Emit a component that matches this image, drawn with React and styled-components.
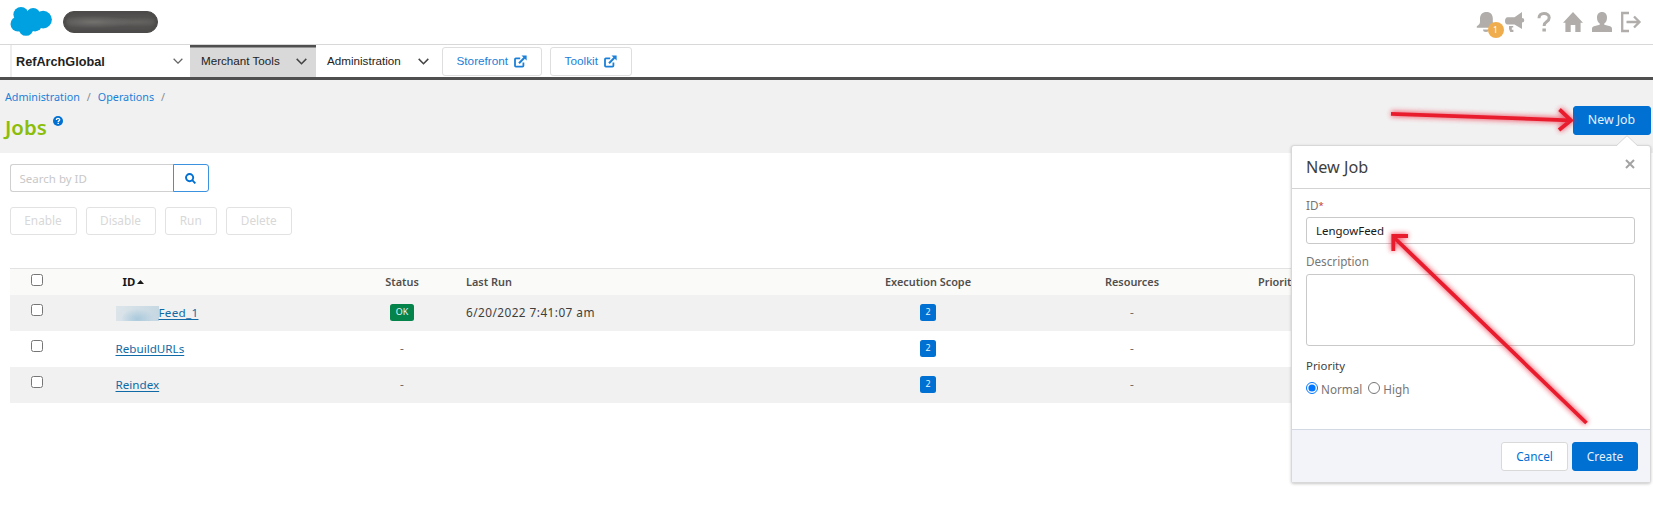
import React from "react";
import styled, { createGlobalStyle, css } from "styled-components";

const GlobalStyle = createGlobalStyle`
  :root {
    --blue: #0070d2;
    --link: #1b80d8;
    --green: #8bbe0b;
    --grey-bg: #f1f1f1;
    --dark: #4f4f4f;
    --icon: #b0adab;
  }

  * {
    box-sizing: border-box;
  }

  body {
    margin: 0;
    background: #fff;
    color: #3e3e3c;
    font-family: "Noto Sans", sans-serif;
    font-size: 11.8px;
    overflow: hidden;
  }

  input,
  textarea,
  button {
    font-family: inherit;
  }
`;

const Page = styled.div`
  position: relative;
  height: 515px;
  overflow: hidden;
`;

/* Top bar */

const TopBar = styled.header`
  display: flex;
  align-items: flex-start;
  height: 45px;
  padding: 7px 12.5px 0 10px;
  border-bottom: 1px solid #d8d8d8;
`;

const Account = styled.div`
  width: 95px;
  height: 22px;
  margin: 3.5px 0 0 10px;
  border: 1px solid #4c4a49;
  border-radius: 11px;
  background: radial-gradient(ellipse at 32% 50%, #74726f 0, transparent 45%),
    radial-gradient(ellipse at 78% 50%, #666461 0, transparent 35%), #535150;
  box-shadow: inset 0 0 3px 2px #4c4a49;
`;

const TopIcons = styled.div`
  display: flex;
  gap: 9px;
  margin: 5px 0 0 auto;
  color: var(--icon);

  svg {
    display: block;
    overflow: visible;
  }
`;

const Notifications = styled.div`
  position: relative;
`;

const Count = styled.span`
  position: absolute;
  left: 12px;
  top: 9.5px;
  width: 16px;
  height: 16px;
  border-radius: 50%;
  background: #f0ad4e;
  color: #fff;
  font-size: 8.5px;
  line-height: 16px;
  text-align: center;
`;

/* Navigation */

const Nav = styled.nav`
  display: flex;
  height: 35px;
  padding-left: 10px;
  border-bottom: 3px solid var(--dark);
  color: #222;
  font-family: "Liberation Sans", Arial, sans-serif;
  font-size: 11.65px;
  line-height: 32px;
`;

const Site = styled.div`
  display: flex;
  justify-content: space-between;
  width: 180px;
  padding: 1px 7px 0 4px;
  border-left: 2px solid #eee;
  font-size: 12.7px;
  font-weight: 700;

  svg {
    margin-top: 12px;
  }
`;

const NavTab = styled.div`
  display: flex;
  justify-content: space-between;
  width: ${({ $width }) => $width}px;
  padding: 0 ${({ $end = 9 }) => $end}px 0 11px;

  svg {
    margin-top: 13px;
  }

  ${({ $active }) =>
    $active &&
    css`
      background: #d9d9d9;
      box-shadow: inset 0 2.5px 0 var(--dark);
    `}
`;

const NavLink = styled.a`
  display: flex;
  align-items: center;
  gap: 6px;
  height: 29px;
  margin: 1.5px 7.5px 0 0;
  padding: 0 14px;
  border: 1px solid #dedede;
  border-radius: 3px;
  color: var(--link);
  line-height: 25px;
  font-size: 11.75px;

  span {
    padding-bottom: 2px;
  }
`;

/* Page heading */

const Heading = styled.section`
  display: flex;
  justify-content: space-between;
  height: 73px;
  padding: 0 2.5px 0 5px;
  background: var(--grey-bg);
`;

const Crumbs = styled.div`
  display: flex;
  gap: 7px;
  padding-top: 9px;
  font-size: 10.75px;
  line-height: 16px;
  color: #8a8a8a;

  a {
    color: var(--link);
  }
`;

const Title = styled.h1`
  display: flex;
  gap: 6px;
  margin: 0;
  padding-top: 8px;
  color: var(--green);
  font-size: 20.4px;
  font-weight: 600;
  line-height: 28px;

  svg {
    margin-top: 3px;
  }
`;

const Button = styled.button`
  height: 28.5px;
  width: ${({ $width }) => $width}px;
  padding: 0 0 1px;
  border: 1px solid #d9d9d9;
  border-radius: 3px;
  background: #fff;
  color: var(--blue);
  font-size: 11.8px;

  ${({ $primary }) =>
    $primary &&
    css`
      border-color: var(--blue);
      background: var(--blue);
      color: #e6f1fb;
    `}

  &:disabled {
    border-color: #e2e2e2;
    color: #d8d8d8;
  }
`;

const NewJobButton = styled(Button)`
  height: 29px;
  margin-top: 25.5px;
  font-size: 12.3px;
`;

/* Toolbar */

const Search = styled.div`
  display: flex;
  margin: 11px 0 0 9.5px;
`;

const SearchInput = styled.input`
  width: 164px;
  height: 28px;
  padding: 0 9px 0;
  border: 1px solid #d0d0d0;
  border-right: 0;
  border-radius: 3px 0 0 3px;
  outline: 0;
  font-size: 11.5px;

  &::placeholder {
    color: #c8c8c8;
  }
`;

const SearchButton = styled.button`
  display: flex;
  align-items: center;
  justify-content: center;
  width: 36.5px;
  height: 28px;
  margin-left: -1px;
  padding: 0;
  border: 1px solid #3b92df;
  border-radius: 0 3px 3px 0;
  background: #fff;
`;

const Actions = styled.div`
  display: flex;
  gap: 9px;
  margin: 14.5px 0 0 9.5px;
`;

/* Jobs table */

const Table = styled.div`
  margin: 32.5px 3px 0 10px;
  border-top: 1px solid #e2e2e2;
`;

const Row = styled.div`
  display: grid;
  grid-template-columns: 105.5px 247px 78px 387.5px 200px 208px 1fr;
  height: ${({ $height = 36 }) => $height}px;
  line-height: 34.5px;
  background: ${({ $striped }) => ($striped ? "var(--grey-bg)" : "#fff")};
`;

const HeadRow = styled(Row)`
  background: #fafaf9;
  font-size: 10.9px;
  font-weight: 600;
  line-height: 26px;
  color: #514f4d;
`;

const Cell = styled.div`
  padding-left: ${({ $indent = 0 }) => $indent}px;
  white-space: nowrap;
  text-align: ${({ $center }) => ($center ? "center" : "left")};
`;

const SortedCell = styled(Cell)`
  color: #181818;
  font-size: 11.4px;
  font-weight: 700;

  svg {
    margin: 0 0 2px 2px;
  }
`;

const Check = styled.input`
  display: block;
  width: 12px;
  height: 12px;
  margin: ${({ $top = 9 }) => $top}px 0 0 21px;
`;

const JobLink = styled.a`
  color: #0f6aa5;
  font-size: 11.65px;
  text-decoration: underline;
  text-underline-offset: 2px;
`;

const Redacted = styled.span`
  display: inline-block;
  width: 43px;
  height: 15px;
  vertical-align: -4px;
  background: radial-gradient(ellipse at 50% 85%, #a9c9dc 0, transparent 55%),
    linear-gradient(100deg, #dde5ea, #c5d7e2);

  & + a {
    letter-spacing: 0.3px;
  }
`;

const Empty = styled.span`
  color: #706e6b;
`;

const DateText = styled.span`
  letter-spacing: 0.45px;
`;

const Badge = styled.span`
  display: block;
  width: ${({ $width }) => $width}px;
  height: 17px;
  margin: 9.5px auto 0;
  border-radius: 2.5px;
  background: ${({ $color }) => $color};
  color: #e9f4fb;
  font-size: 8.9px;
  line-height: 16px;
  text-align: center;
`;

/* New job popover */

const Popover = styled.div`
  position: absolute;
  left: 1291px;
  top: 145px;
  width: 360px;
  height: 338px;
  border: 1px solid #d8d8d8;
  border-radius: 3px;
  background: #fff;
  box-shadow: 0 1px 3px rgba(0, 0, 0, 0.22);
`;

const Caret = styled.svg`
  position: absolute;
  right: 12.5px;
  top: -11px;
`;

const PopoverHeader = styled.div`
  display: flex;
  justify-content: space-between;
  height: 43px;
  padding: 0 15.5px 0 14px;
  border-bottom: 1px solid #d3d3d3;
  color: #3e3e3c;
  font-size: 16.2px;
  line-height: 43px;

  svg {
    margin-top: 13px;
  }
`;

const PopoverBody = styled.div`
  display: flex;
  flex-direction: column;
  height: 240px;
  padding: 8px 15px 0 14px;
  line-height: 16px;
`;

const Label = styled.label`
  color: #777573;
  font-size: 11.7px;
`;

const Required = styled.span`
  color: #c23934;
  font-size: 9.5px;
  vertical-align: 1px;
  line-height: 1;
`;

const field = css`
  display: block;
  width: 329px;
  border: 1px solid #c9c9c9;
  border-radius: 3px;
  outline: 0;
  color: #181818;
  font-size: 11.45px;
`;

const TextField = styled.input`
  ${field}
  height: 27px;
  margin: 4px 0 9px;
  padding: 0 9px 1px;
`;

const TextArea = styled.textarea`
  ${field}
  height: 72px;
  margin: 5px 0 12px;
  resize: none;
`;

const Legend = styled.div`
  font-size: 11.4px;
`;

const Options = styled.div`
  display: flex;
  align-items: center;
  margin-top: 7px;
  color: #777573;
  font-size: 11.7px;

  input {
    width: 12px;
    height: 12px;
    margin: 0 3px 3px 0;
  }

  label {
    display: flex;
    align-items: center;
    margin-right: 6px;
  }
`;

const PopoverFooter = styled.div`
  display: flex;
  justify-content: flex-end;
  gap: 4px;
  height: 53px;
  padding: 11.5px 12px 0;
  border-top: 1.5px solid #d3d8e3;
  background: #f3f4f9;

  button {
    height: 29px;
  }
`;

const Annotations = styled.svg`
  position: absolute;
  left: 0;
  top: 0;
  pointer-events: none;
`;

const Chevron = ({ size = 11, color = "#444", weight = 1.5 }) => (
  <svg width={size} height={(size * 7) / 11} viewBox="0 0 11 7" fill="none" stroke={color} strokeWidth={weight}>
    <path d="M.7.9 5.5 5.7 10.3.9" />
  </svg>
);

const ExternalIcon = () => (
  <svg width="13" height="13" viewBox="0 0 13 13" fill="none" stroke="currentColor">
    <path d="M6.2 3.4H1.9a.9.9 0 0 0-.9.9v6.5c0 .5.4.9.9.9h6.6c.5 0 .9-.4.9-.9V7.6" strokeWidth="1.8" />
    <path d="M5 8.2 10.4 2.8" strokeWidth="2" />
    <path d="M7.5.4h5.1v5.1z" fill="currentColor" stroke="none" />
  </svg>
);

const Cloud = () => (
  <svg width="43" height="30" viewBox="10 7 43 30" fill="#00a1e0">
    <circle cx="21" cy="14.6" r="7.6" />
    <circle cx="33.2" cy="15" r="7" />
    <circle cx="43.1" cy="19.6" r="8.8" />
    <circle cx="18" cy="24" r="7.5" />
    <circle cx="26" cy="28.4" r="7.4" />
    <circle cx="35" cy="24.2" r="7.2" />
    <circle cx="28" cy="20" r="7.5" />
  </svg>
);

const jobs = [
  { id: "Feed_1", redacted: true, status: "OK", lastRun: "6/20/2022 7:41:07 am" },
  { id: "RebuildURLs" },
  { id: "Reindex" },
];

const Header = () => (
  <TopBar>
    <Cloud />
    <Account />
    <TopIcons>
      <Notifications>
        <svg width="20" height="20" viewBox="0 0 20 20" fill="currentColor">
          <path d="M10.5 0C6.500 0 4 2.600 4 6.600v3.200c0 2-1 3.400-3.200 4.400v1.600h19v-1.600c-2-1-3-2.400-3-4.400V6.600C16.800 2.600 14.500 0 10.500 0z" />
          <path d="M7 17.500h6a3 2.500 0 0 1-6 0z" />
        </svg>
        <Count>1</Count>
      </Notifications>
      <svg width="20" height="20" viewBox="0 0 20 20" fill="currentColor">
        <path d="M17 0v6a2.200 2.200 0 0 1 0 4.600v6.500L9.500 12.500H2.500C1 12.500 0 11 0 9s1-3.800 2.500-3.800h7z" />
        <path d="M4 14h4.200v1.600H6.800v2.200h1.600V20H5.300L4 17z" />
      </svg>
      <svg width="20" height="20" viewBox="0 0 20 20" fill="none" stroke="currentColor" strokeWidth="3">
        <path d="M5 6.200C5 3.200 7 1.500 10 1.500s5.200 1.600 5.200 4.200c0 4.300-5 3.700-5 7.500v.8" />
        <path d="M8.400 18h3.500" />
      </svg>
      <svg width="20" height="20" viewBox="0 0 20 20" fill="currentColor">
        <path d="M10 0 20 10.800h-2.400V20h-5.300v-7H7.700v7H2.400v-9.200H0z" />
      </svg>
      <svg width="20" height="20" viewBox="0 0 20 20" fill="currentColor">
        <path d="M10 0c3 0 5 2.100 5 5.500 0 2.800-1 5-2.700 6v1.200l5.800 1.600c1.300.4 1.900 1.400 1.900 2.900V20H0v-2.800c0-1.500.6-2.500 1.900-2.900l5.800-1.600v-1.200C6 10.500 5 8.300 5 5.500 5 2.100 7 0 10 0z" />
      </svg>
      <svg width="20" height="20" viewBox="0 0 20 20" fill="none" stroke="currentColor" strokeWidth="2.3">
        <path d="M8 1H1.200v18H8" />
        <path d="M5.500 10h13M13 4.500 18.500 10 13 15.500" />
      </svg>
    </TopIcons>
  </TopBar>
);

const NewJobPopover = () => (
  <Popover>
    <Caret width="22" height="12" viewBox="0 0 22 12">
      <path d="M0 11.500 11 .7 22 11.500V12H0z" fill="#fff" />
      <path d="M0 11 11 .7 22 11" fill="none" stroke="#d8d8d8" />
    </Caret>
    <PopoverHeader>
      New Job
      <svg width="10" height="10" viewBox="0 0 10 10" stroke="#a3a3a3" strokeWidth="2">
        <path d="M1 1l8 8M9 1 1 9" />
      </svg>
    </PopoverHeader>
    <PopoverBody>
      <Label>
        ID<Required>*</Required>
      </Label>
      <TextField defaultValue="LengowFeed" />
      <Label>Description</Label>
      <TextArea />
      <Legend>Priority</Legend>
      <Options>
        <label>
          <input type="radio" name="priority" defaultChecked />
          Normal
        </label>
        <label>
          <input type="radio" name="priority" />
          High
        </label>
      </Options>
    </PopoverBody>
    <PopoverFooter>
      <Button $width={67}>Cancel</Button>
      <Button $primary $width={66}>
        Create
      </Button>
    </PopoverFooter>
  </Popover>
);

const App = () => {
  return (
    <Page>
      <GlobalStyle />
      <Header />
      <Nav>
        <Site>
          RefArchGlobal
          <Chevron size={10} color="#666" weight={1.4} />
        </Site>
        <NavTab $active $width={126}>
          Merchant Tools
          <Chevron />
        </NavTab>
        <NavTab $width={125.5} $end={12.5}>
          Administration
          <Chevron />
        </NavTab>
        <NavLink>
          <span>Storefront</span>
          <ExternalIcon />
        </NavLink>
        <NavLink>
          <span>Toolkit</span>
          <ExternalIcon />
        </NavLink>
      </Nav>

      <Heading>
        <div>
          <Crumbs>
            <a>Administration</a>/<a>Operations</a>/
          </Crumbs>
          <Title>
            Jobs
            <svg width="10" height="10" viewBox="0 0 10 10">
              <circle cx="5" cy="5" r="5" fill="#0070d2" />
              <path
                d="M3.400 3.900c0-1 .7-1.500 1.600-1.500s1.700.5 1.700 1.400c0 1.100-1.500 1-1.500 2.100M4.500 7.400h1.400"
                fill="none"
                stroke="#fff"
                strokeWidth="1.3"
              />
            </svg>
          </Title>
        </div>
        <NewJobButton $primary $width={78}>
          New Job
        </NewJobButton>
      </Heading>

      <Search>
        <SearchInput placeholder="Search by ID" />
        <SearchButton>
          <svg width="11" height="11" viewBox="0 0 11 11" fill="none" stroke="#0070d2" strokeWidth="1.9">
            <circle cx="4.6" cy="4.6" r="3.6" />
            <path d="m7.200 7.200 3.200 3.200" />
          </svg>
        </SearchButton>
      </Search>
      <Actions>
        <Button disabled $width={67}>Enable</Button>
        <Button disabled $width={70}>Disable</Button>
        <Button disabled $width={52.5}>Run</Button>
        <Button disabled $width={65.5}>Delete</Button>
      </Actions>

      <Table>
        <HeadRow $height={26}>
          <Check type="checkbox" $top={5} />
          <SortedCell $indent={7}>
            ID
            <svg width="7" height="4" viewBox="0 0 7 4">
              <path d="M0 4 3.500 0 7 4z" fill="#181818" />
            </svg>
          </SortedCell>
          <Cell $center $indent={1}>Status</Cell>
          <Cell $indent={25.5}>Last Run</Cell>
          <Cell $center>Execution Scope</Cell>
          <Cell $center>Resources</Cell>
          <Cell $indent={22}>Priority</Cell>
        </HeadRow>
        {jobs.map((job, i) => (
          <Row key={job.id} $striped={i % 2 === 0}>
            <Check type="checkbox" />
            <Cell>
              {job.redacted && <Redacted />}
              <JobLink>{job.id}</JobLink>
            </Cell>
            <Cell $center $indent={1}>
              {job.status ? (
                <Badge $color="#04844b" $width={23.5}>
                  {job.status}
                </Badge>
              ) : (
                <Empty>-</Empty>
              )}
            </Cell>
            <Cell $indent={25.5}>
              <DateText>{job.lastRun}</DateText>
            </Cell>
            <Cell $center>
              <Badge $color="#0070d2" $width={16}>
                2
              </Badge>
            </Cell>
            <Cell $center>
              <Empty>-</Empty>
            </Cell>
            <Cell />
          </Row>
        ))}
      </Table>

      <NewJobPopover />

      <Annotations width="1653" height="515" viewBox="0 0 1653 515" fill="none">
        <defs>
          <filter id="glow" filterUnits="userSpaceOnUse" x="1370" y="90" width="240" height="350">
            <feGaussianBlur stdDeviation="2.5" />
          </filter>
          <g id="arrows">
            <path d="M1391 113.800 1570 120.300M1559.500 109.500 1571 120.300 1559 130" />
            <path d="M1586.500 423 1394 237.500M1408 236H1393.300V251" />
          </g>
        </defs>
        <use href="#arrows" stroke="#f0283c" strokeWidth="6" opacity=".65" filter="url(#glow)" />
        <use href="#arrows" stroke="#e91c2e" strokeWidth="3.8" />
      </Annotations>
    </Page>
  );
};

export default App;
